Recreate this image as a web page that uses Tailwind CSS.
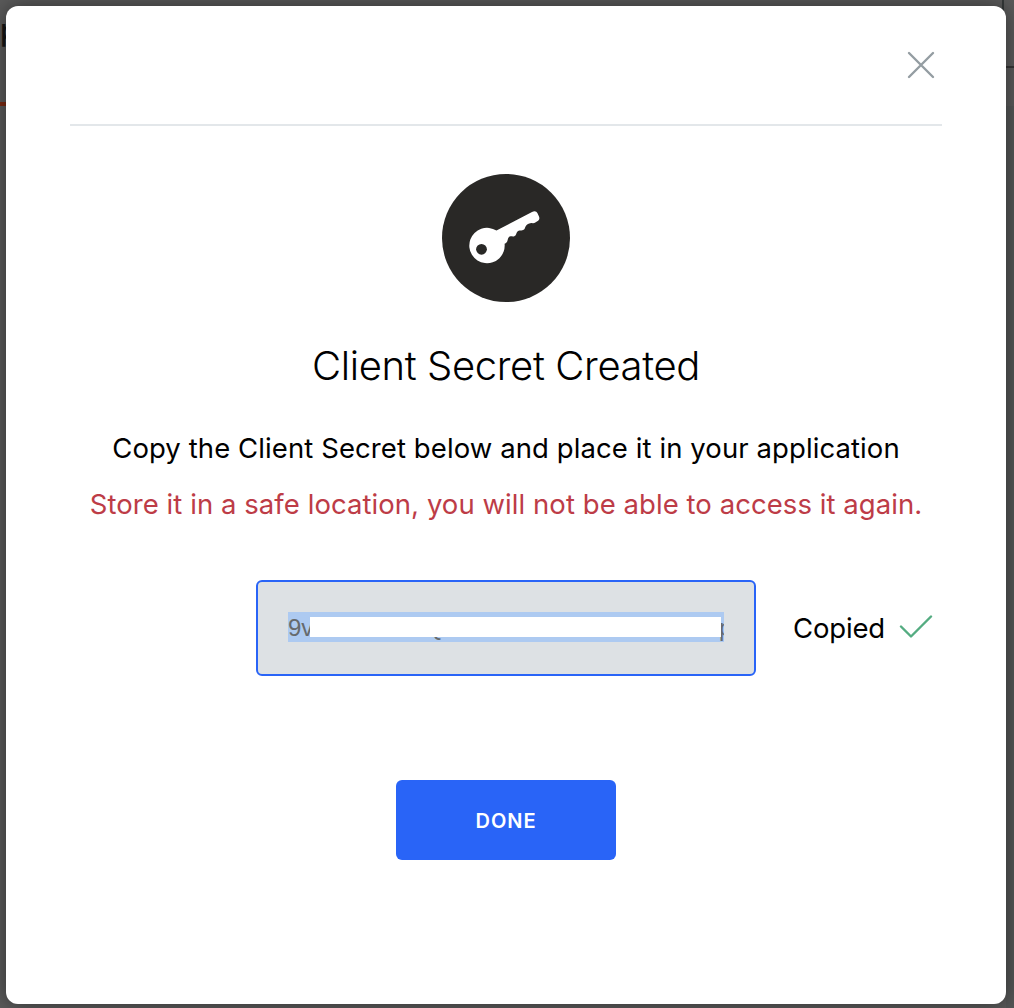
<!DOCTYPE html>
<html lang="en">
<head>
<meta charset="utf-8">
<title>Client Secret Created</title>
<script src="https://cdn.jsdelivr.net/npm/@tailwindcss/browser@4"></script>
</head>
<body class="relative h-[1008px] w-[1014px] overflow-hidden bg-[#5a5a5a] pl-1.5 pt-1.5 font-['Inter',sans-serif] text-black">
  <!-- dimmed page behind the dialog -->
  <div class="absolute left-0 top-[12px] text-[30px] font-medium leading-[36px] text-[#151515]">p</div>
  <div class="absolute left-0 top-[102px] h-1 w-1.5 bg-[#7a2a12]"></div>
  <div class="absolute left-[1002px] top-0 h-[67px] w-0.5 bg-[#343838]"></div>
  <div class="absolute left-[1006px] top-[66px] h-0.5 w-2 bg-[#343434]"></div>
  <div class="absolute left-[1006px] top-[106px] h-[902px] w-2 bg-[#545656]"></div>

  <main class="relative flex h-[998px] w-[1000px] flex-col items-center rounded-xl bg-white px-16 shadow-[0_0_20px_rgba(0,0,0,0.45)]">
    <header class="flex h-[120px] w-full shrink-0 justify-end border-b-2 border-[#e3e7ea] pr-[7px] pt-[45px]">
      <button aria-label="Close" class="h-7 w-7">
        <svg viewBox="0 0 28 28" class="h-7 w-7" fill="none" stroke="#949da2" stroke-width="2.4" stroke-linecap="round"><path d="M2 2L26 26M26 2L2 26"/></svg>
      </button>
    </header>

    <svg viewBox="0 0 128 128" class="mt-12 h-32 w-32 shrink-0">
      <circle cx="64" cy="64" r="64" fill="#292826"/>
      <path fill="#fff" d="M54.5 56.6L90 38C92.5 36.7 94.600 37.200 95.500 39.300L97 42.500C98 45 97 46.800 94.500 47.800C93.200 48.400 92.500 49.500 90.500 49.200C88.500 48.800 85.500 50 84 51.700C82.700 53.200 83.300 55.300 81.200 56.100C79 57 77.200 55.500 75.500 57.500C74 59.200 74.500 61.500 72.300 62.200C70.300 62.800 68 61.500 66.600 63.500C65.200 65.500 66.200 68.500 62.600 69.700A17.700 17.700 0 1 1 54.500 56.600Z"/>
      <circle cx="39.500" cy="75.300" r="5.400" fill="#292826"/>
    </svg>

    <h1 class="mt-10 whitespace-nowrap text-[40px] font-light leading-[48px] tracking-[-0.38px]">Client Secret Created</h1>
    <p class="mt-10 whitespace-nowrap text-[27.5px] leading-[36px] tracking-[0.09px]">Copy the Client Secret below and place it in your application</p>
    <p class="mt-5 whitespace-nowrap text-[27.5px] leading-[36px] tracking-[0.06px] text-[#bd3c47]">Store it in a safe location, you will not be able to access it again.</p>

    <div class="mt-[58px] flex w-full shrink-0 items-center pl-[186px]">
      <div class="flex h-24 w-[500px] shrink-0 items-center rounded-md border-2 border-[#2964f7] bg-[#dde1e4] px-[30px] pb-0.5">
        <div class="relative h-[30px] w-[436px] overflow-hidden bg-[#adcaf1] font-['Liberation_Sans',sans-serif] text-[24px] leading-[31px] text-[#666a6d]">
          <span>9v</span>
          <span class="absolute left-[137px] top-[-1px]">Q</span>
          <span class="absolute left-[431px] top-0">p</span>
          <div class="absolute left-[22px] top-[5px] h-5 w-[411px] bg-white"></div>
        </div>
      </div>
      <span class="ml-[37px] w-[92px] whitespace-nowrap text-[27.5px] leading-9 tracking-[-0.15px]">Copied</span>
      <svg viewBox="0 0 34 24" class="ml-3.5 mt-[-4px] h-6 w-[34px] shrink-0" fill="none" stroke="#54ac81" stroke-width="2.4" stroke-linecap="round" stroke-linejoin="round"><path d="M2 12.500L12 22.500L32 2.500"/></svg>
    </div>

    <button class="mt-[104px] h-20 w-[220px] shrink-0 rounded-md bg-[#2964f7] pt-0.5 text-[20px] font-semibold tracking-[1px] text-white">DONE</button>
  </main>
</body>
</html>
